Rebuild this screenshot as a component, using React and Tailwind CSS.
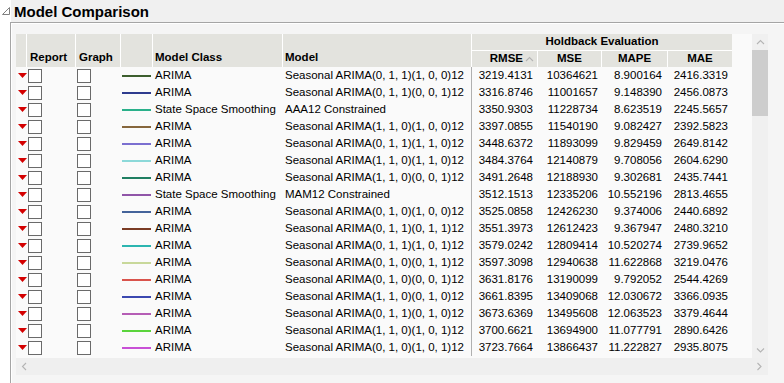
import React from 'react';

const rows = [
  ['#3d5e2e', 'ARIMA', 'Seasonal ARIMA(0, 1, 1)(1, 0, 0)12', '3219.4131', '10364621', '8.900164', '2416.3319'],
  ['#2e3b8e', 'ARIMA', 'Seasonal ARIMA(0, 1, 1)(0, 0, 1)12', '3316.8746', '11001657', '9.148390', '2456.0873'],
  ['#2ab08a', 'State Space Smoothing', 'AAA12 Constrained', '3350.9303', '11228734', '8.623519', '2245.5657'],
  ['#86663c', 'ARIMA', 'Seasonal ARIMA(1, 1, 0)(1, 0, 0)12', '3397.0855', '11540190', '9.082427', '2392.5823'],
  ['#7b6fd0', 'ARIMA', 'Seasonal ARIMA(0, 1, 1)(1, 1, 0)12', '3448.6372', '11893099', '9.829459', '2649.8142'],
  ['#8cd9d9', 'ARIMA', 'Seasonal ARIMA(1, 1, 0)(1, 1, 0)12', '3484.3764', '12140879', '9.708056', '2604.6290'],
  ['#1f7f62', 'ARIMA', 'Seasonal ARIMA(1, 1, 0)(0, 0, 1)12', '3491.2648', '12188930', '9.302681', '2435.7441'],
  ['#9055a8', 'State Space Smoothing', 'MAM12 Constrained', '3512.1513', '12335206', '10.552196', '2813.4655'],
  ['#44639a', 'ARIMA', 'Seasonal ARIMA(0, 1, 0)(1, 0, 0)12', '3525.0858', '12426230', '9.374006', '2440.6892'],
  ['#7a3b24', 'ARIMA', 'Seasonal ARIMA(0, 1, 1)(0, 1, 1)12', '3551.3973', '12612423', '9.367947', '2480.3210'],
  ['#2cb5b0', 'ARIMA', 'Seasonal ARIMA(0, 1, 1)(1, 0, 1)12', '3579.0242', '12809414', '10.520274', '2739.9652'],
  ['#c8d89a', 'ARIMA', 'Seasonal ARIMA(0, 1, 0)(0, 1, 1)12', '3597.3098', '12940638', '11.622868', '3219.0476'],
  ['#d9534c', 'ARIMA', 'Seasonal ARIMA(0, 1, 0)(0, 0, 1)12', '3631.8176', '13190099', '9.792052', '2544.4269'],
  ['#3b48b0', 'ARIMA', 'Seasonal ARIMA(1, 1, 0)(0, 1, 0)12', '3661.8395', '13409068', '12.030672', '3366.0935'],
  ['#b55db5', 'ARIMA', 'Seasonal ARIMA(0, 1, 1)(0, 1, 0)12', '3673.6369', '13495608', '12.063523', '3379.4644'],
  ['#5ad43c', 'ARIMA', 'Seasonal ARIMA(1, 1, 0)(1, 0, 1)12', '3700.6621', '13694900', '11.077791', '2890.6426'],
  ['#c850d6', 'ARIMA', 'Seasonal ARIMA(0, 1, 0)(1, 0, 1)12', '3723.7664', '13866437', '11.222827', '2935.8075'],
];

const cols = 'grid grid-cols-[11px_49px_45px_32px_130px_189px_66px_64px_66px_64px]';

const Chevron = ({ dir }) => {
  const d = {
    up: 'M1 5 L4.5 1.5 L8 5',
    down: 'M1 1.5 L4.5 5 L8 1.5',
    left: 'M5 1 L1.5 4.5 L5 8',
    right: 'M1.5 1 L5 4.5 L1.5 8',
  }[dir];
  const vert = dir === 'up' || dir === 'down';
  return (
    <svg width={vert ? 9 : 7} height={vert ? 7 : 9} viewBox={vert ? '0 0 9 7' : '0 0 7 9'}>
      <path d={d} fill="none" stroke="#b4b4b4" strokeWidth="1.1" />
    </svg>
  );
};

const Checkbox = () => (
  <div className="w-[14px] h-[14px] border border-[#6a6a6a] bg-white" />
);

export default function App() {
  return (
    <div className="w-[784px] h-[383px] bg-white overflow-hidden font-['Liberation_Sans',Arial,sans-serif] text-[11.5px] text-black">
      {/* title bar */}
      <div className="flex h-[22px]">
        <div className="w-[11px] flex items-center justify-center">
          <svg width="10" height="10" viewBox="0 0 10 10">
            <path d="M8.5 1.5 L8.5 8.5 L1.5 8.5 Z" fill="none" stroke="#808080" strokeWidth="1" />
          </svg>
        </div>
        <div className="flex-1 bg-[#f0f0f0] flex items-center pl-[3px] text-[15px] font-bold leading-none">
          Model Comparison
        </div>
      </div>

      <div className="ml-[10px] h-[361px] border-t border-l border-[#a5a5a5] bg-[#f5f5f5]">
        <div className="h-full border-t border-l border-white pl-[4px] pt-[10px]">
          <div className="flex">
            {/* table viewport */}
            <div className="w-[736px] h-[324px] bg-[#fafafa] overflow-hidden">
              <div className={`${cols} grid-rows-[17px_16px] font-bold`}>
                <div className="row-span-2 bg-[#e3e3de] border-r border-white" />
                <div className="row-span-2 bg-[#e3e3de] border-r border-white flex items-end pl-[3px] pb-[1px]">Report</div>
                <div className="row-span-2 bg-[#e3e3de] border-r border-white flex items-end pl-[3px] pb-[1px]">Graph</div>
                <div className="row-span-2 bg-[#e3e3de] border-r border-white" />
                <div className="row-span-2 bg-[#e3e3de] border-r border-white flex items-end pl-[2px] pb-[1px]">Model Class</div>
                <div className="row-span-2 bg-[#e3e3de] border-r border-white flex items-end pl-[2px] pb-[1px]">Model</div>
                <div className="col-span-4 bg-[#e3e3de] border-b border-white flex items-center justify-center">Holdback Evaluation</div>
                <div className="bg-[#e3e3de] border-r border-white flex items-center justify-end pr-[3px] gap-[2px]">
                  RMSE
                  <Chevron dir="up" />
                </div>
                <div className="bg-[#e3e3de] border-r border-white flex items-center justify-center">MSE</div>
                <div className="bg-[#e3e3de] border-r border-white flex items-center justify-center">MAPE</div>
                <div className="bg-[#e3e3de] flex items-center justify-center">MAE</div>
              </div>

              {rows.map((r, i) => (
                <div key={i} className={`${cols} h-[17px] items-center`}>
                  <div className="flex justify-center pl-[1px] pb-[1px]">
                    <svg width="9" height="5" viewBox="0 0 9 5">
                      <path d="M0 0 L9 0 L4.5 5 Z" fill="#d40000" />
                    </svg>
                  </div>
                  <div className="pl-[1px] pt-[1px]"><Checkbox /></div>
                  <div className="pl-[1px] pt-[1px]"><Checkbox /></div>
                  <div className="pl-[1px]">
                    <div className="w-[29px] h-[2px]" style={{ backgroundColor: r[0] }} />
                  </div>
                  <div className="pl-[2px] whitespace-nowrap">{r[1]}</div>
                  <div className="h-full flex items-center pl-[2px] whitespace-nowrap border-r border-[#b0b0b0]">{r[2]}</div>
                  <div className="text-right pr-[5px]">{r[3]}</div>
                  <div className="text-right pr-[4px]">{r[4]}</div>
                  <div className="text-right pr-[6px]">{r[5]}</div>
                  <div className="text-right pr-[4px]">{r[6]}</div>
                </div>
              ))}
            </div>

            {/* vertical scrollbar */}
            <div className="w-[16px] h-[324px] bg-[#f0f0f0] flex flex-col">
              <div className="h-[16px] flex items-center justify-center">
                <Chevron dir="up" />
              </div>
              <div className="h-[66px] bg-[#cdcdcd]" />
              <div className="flex-1" />
              <div className="h-[16px] flex items-center justify-center">
                <Chevron dir="down" />
              </div>
            </div>
          </div>

          {/* horizontal scrollbar */}
          <div className="w-[752px] h-[17px] bg-[#efefef] flex items-center justify-between px-[5px]">
            <Chevron dir="left" />
            <Chevron dir="right" />
          </div>
        </div>
      </div>
    </div>
  );
}
